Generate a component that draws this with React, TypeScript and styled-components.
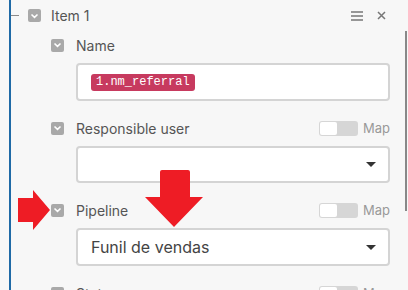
import React, { FC } from 'react';
import styled, { createGlobalStyle } from 'styled-components';

const GlobalStyle = createGlobalStyle`
    html, body {
        margin: 0;
        padding: 0;
        background: #f7f7f7;
    }
    body {
        font-family: Inter, "Noto Sans", Arial, sans-serif;
        color: #555;
    }
`;

const Page = styled.div`
    position: relative;
    width: 408px;
    height: 290px;
    overflow: hidden;
    background: #f7f7f7;
`;

const Tree = styled.div`
    margin-left: 9px;
    border-left: 2px solid #1f6aa6;
    min-height: 290px;
    padding-right: 18px;
`;

const Header = styled.div`
    display: flex;
    align-items: center;
    height: 31px;
`;

const Dash = styled.span`
    width: 8px;
    height: 1px;
    background: #8a8a8a;
    margin-right: 9px;
`;

const Toggle = styled.span`
    width: 13px;
    height: 13px;
    border-radius: 2px;
    background: #a9a9a9;
    display: flex;
    align-items: center;
    justify-content: center;
    flex-shrink: 0;
`;

const Title = styled.span`
    margin-left: 10px;
    font-size: 14px;
    color: #555;
    flex: 1;
`;

const HeaderIcons = styled.div`
    display: flex;
    align-items: center;
    gap: 14px;
    margin-right: 4px;
`;

const Fields = styled.div`
    padding-left: 40px;
`;

const Field = styled.div`
    margin-bottom: 13px;
`;

const LabelRow = styled.div`
    display: flex;
    align-items: center;
    height: 28px;
`;

const Label = styled.span`
    margin-left: 12px;
    font-size: 14px;
    color: #555;
    flex: 1;
`;

const MapSwitch = styled.span`
    display: flex;
    align-items: center;
    gap: 5px;
    font-size: 13px;
    color: #999;
`;

const Track = styled.span`
    width: 39px;
    height: 15px;
    border-radius: 3px;
    background: #d6d6d6;
    display: flex;
    align-items: center;
    padding-left: 1px;
    box-sizing: border-box;
`;

const Knob = styled.span`
    width: 17px;
    height: 13px;
    border-radius: 2px;
    background: #fff;
`;

const Box = styled.div<{ $height: number }>`
    margin-left: 25px;
    margin-top: 4px;
    height: ${p => p.$height}px;
    box-sizing: border-box;
    background: #fff;
    border: 2px solid #d4d4d4;
    border-radius: 4px;
    display: flex;
    align-items: center;
    padding: 0 12px 0 13px;
`;

const Pill = styled.span`
    background: #c73a5f;
    color: #fff;
    font-family: "Liberation Mono", "DejaVu Sans Mono", monospace;
    font-size: 12px;
    line-height: 17px;
    padding: 0 5px;
    border-radius: 3px;
`;

const SelectText = styled.span`
    flex: 1;
    font-size: 16px;
    color: #444;
`;

const Caret = styled.span`
    width: 0;
    height: 0;
    border-left: 5.5px solid transparent;
    border-right: 5.5px solid transparent;
    border-top: 5px solid #333;
`;

const ScrollBar = styled.div`
    position: absolute;
    left: 405px;
    top: 31px;
    width: 2px;
    height: 180px;
    background: #888;
`;

const Arrow = styled.svg`
    position: absolute;
`;

const Chevron: FC = () => (
    <svg width="9" height="6" viewBox="0 0 9 6">
        <path d="M1.5 1.5 L4.5 4.3 L7.5 1.5" stroke="#fff" strokeWidth="1.6" fill="none" />
    </svg>
);

const MapToggle: FC = () => (
    <MapSwitch>
        <Track>
            <Knob />
        </Track>
        Map
    </MapSwitch>
);

type FieldProps = {
    label: string;
    mappable?: boolean;
};

const FieldHead: FC<FieldProps> = ({ label, mappable }) => (
    <LabelRow>
        <Toggle>
            <Chevron />
        </Toggle>
        <Label>{label}</Label>
        {mappable && <MapToggle />}
    </LabelRow>
);

const App: FC = () => (
    <Page>
        <GlobalStyle />
        <Tree>
            <Header>
                <Dash />
                <Toggle>
                    <Chevron />
                </Toggle>
                <Title>Item 1</Title>
                <HeaderIcons>
                    <svg width="12" height="10" viewBox="0 0 12 10">
                        <path d="M0 1h12M0 5h12M0 9h12" stroke="#777" strokeWidth="1.6" />
                    </svg>
                    <svg width="9" height="9" viewBox="0 0 9 9">
                        <path d="M1 1l7 7M8 1l-7 7" stroke="#777" strokeWidth="1.5" />
                    </svg>
                </HeaderIcons>
            </Header>
            <Fields>
                <Field>
                    <FieldHead label="Name" />
                    <Box $height={38}>
                        <Pill>1.nm_referral</Pill>
                    </Box>
                </Field>
                <Field>
                    <FieldHead label="Responsible user" mappable />
                    <Box $height={37}>
                        <SelectText />
                        <Caret />
                    </Box>
                </Field>
                <Field>
                    <FieldHead label="Pipeline" mappable />
                    <Box $height={38}>
                        <SelectText>Funil de vendas</SelectText>
                        <Caret />
                    </Box>
                </Field>
                <Field>
                    <FieldHead label="Status" mappable />
                </Field>
            </Fields>
        </Tree>
        <ScrollBar />
        <Arrow width="34" height="42" viewBox="0 0 34 42" style={{ left: 17, top: 189 }}>
            <path d="M1 9 H16 V1 L33 21 L16 41 V33 H1 Z" fill="#ee1c25" />
        </Arrow>
        <Arrow width="60" height="60" viewBox="0 0 60 60" style={{ left: 144, top: 169 }}>
            <path d="M16 3 Q16 1 18 1 H44 Q46 1 46 3 V28 H59 L30 58 L1 28 H16 Z" fill="#ee1c25" />
        </Arrow>
    </Page>
);

export default App;
